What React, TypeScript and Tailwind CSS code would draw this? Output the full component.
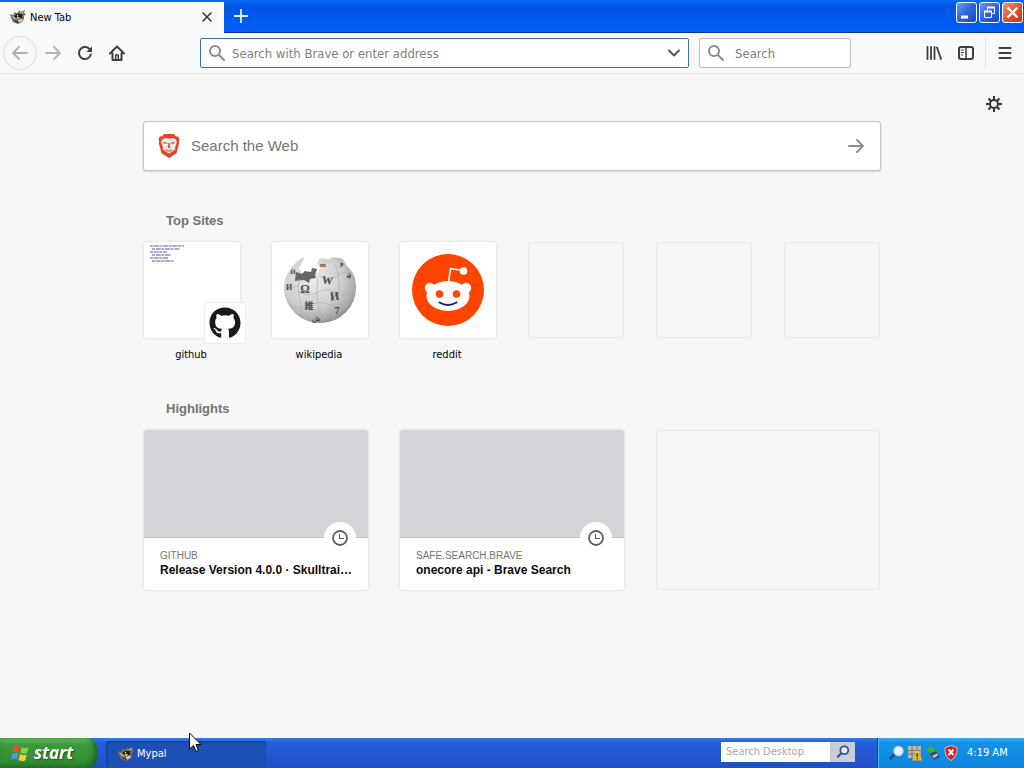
// src/App.tsx
import React from 'react';
import { FaGithub } from 'react-icons/fa';

const UI_FONT = "font-['DejaVu_Sans_Condensed','DejaVu_Sans',sans-serif]";

const MypalIcon: React.FC = () => (
  <svg viewBox="0 0 16 16" className="h-4 w-4 shrink-0" aria-hidden="true">
    <path d="M0 5l4 1 0-3 3 1 3-3 0 2 5-2-1 3 2 1-2 2 0 3-2 3-4 2-5-2-1-2-1-2z" fill="#77715f" />
    <path d="M4 7l3-2 5 0 2 2-2 2-4 0-3 1z" fill="#211e18" />
    <path d="M1 6.500l4 1.500 2 3-3-1zM10 4l4-2-1 2.500z" fill="#b9b096" />
    <path d="M6 8h4l-1.500 2.500zM12 6.500l2 0-1 2z" fill="#e3b75a" />
    <path d="M8 11l5-1.500-1 2.500-3 1.500z" fill="#d6d2c2" />
    <path d="M4 11l3 .5 2 2.500-3-.5z" fill="#3b362c" />
    <circle cx="7.500" cy="6.800" r="0.700" fill="#fff" />
  </svg>
);

const SearchIcon: React.FC = () => (
  <svg viewBox="0 0 16 16" className="h-4 w-4 shrink-0" fill="none" stroke="#8c8c8c" strokeWidth="2" strokeLinecap="round" aria-hidden="true">
    <circle cx="6" cy="6" r="5" />
    <path d="M9.8 9.8L15 15" />
  </svg>
);

const ArrowIcon: React.FC<{ className: string }> = ({ className }) => (
  <svg viewBox="0 0 16 16" className={className} fill="none" stroke="currentColor" strokeWidth="1.800" strokeLinecap="round" strokeLinejoin="round" aria-hidden="true">
    <path d="M1 8h14M9 2l6 6-6 6" />
  </svg>
);

const WikipediaGlobe: React.FC = () => (
  <svg viewBox="0 0 72 72" className="h-[72px] w-[72px]" aria-hidden="true">
    <defs>
      <radialGradient id="globe" cx="0.4" cy="0.35" r="0.68">
        <stop offset="0" stopColor="#ececec" />
        <stop offset="0.6" stopColor="#cfcfcf" />
        <stop offset="0.9" stopColor="#a6a6a6" />
        <stop offset="1" stopColor="#858585" />
      </radialGradient>
    </defs>
    <path d="M18 4c3-2 2 2 0 5l-3 6 5 5 14-1 2-5-3-4 2-5c4-2 7 1 10 0l4-2 6 1c5 0 6 5 8 8 6 5 9 12 9 21a36 35 0 0 1-72 2c0-13 7-24 18-31z" fill="url(#globe)" />
    <path d="M12 18l6 2 3-3 6 1 1-4 5 1-2 6 1 3-6 1-1 4-5-3-9 1z" fill="#666" />
    <g fill="none" stroke="#b4b4b4" strokeWidth="0.8">
      <path d="M1 32c5 3 10 1 14-1M15 25c-2 14 1 27 7 40M15 38c8 4 13 3 19 0s12-3 18 1 13 2 19-2M34 25c-3 16 0 29 5 45M51 10c6 14 6 36-2 56M5 50c7 5 14 4 20 1s16-3 22 0 11 2 18-2M35 22c6 4 14 3 20-1l10-5" />
    </g>
    <g fill="#4a4a4a" fontFamily="Liberation Serif, serif" fontWeight="bold" textAnchor="middle">
      <text x="21" y="39" fontSize="12">Ω</text>
      <text x="43" y="30" fontSize="11" transform="rotate(8 43 30)">W</text>
      <text x="51" y="46" fontSize="12" transform="rotate(-5 51 46)">И</text>
      <text x="53" y="60" fontSize="10">7</text>
      <text x="64" y="24" fontSize="10" transform="rotate(22 64 24)">ə</text>
      <text x="25" y="55" fontSize="9" fontFamily="Noto Sans CJK JP, sans-serif">維</text>
      <text x="5" y="36" fontSize="8">И</text>
      <text x="32" y="67" fontSize="7">ش</text>
      <text x="39" y="13" fontSize="7">m</text>
      <text x="57" y="11" fontSize="7">و</text>
      <text x="9" y="20" fontSize="7">Й</text>
    </g>
  </svg>
);

const RedditLogo: React.FC = () => (
  <svg viewBox="0 0 72 72" className="h-[72px] w-[72px]" aria-hidden="true">
    <circle cx="36" cy="36" r="36" fill="#ff4500" />
    <path d="M36.500 28l2-13.500 12 2" fill="none" stroke="#fff" strokeWidth="1.600" strokeLinejoin="round" />
    <circle cx="51.500" cy="17" r="3.800" fill="#fff" />
    <circle cx="18" cy="34" r="5.200" fill="#fff" />
    <circle cx="54" cy="34" r="5.200" fill="#fff" />
    <ellipse cx="36" cy="42" rx="21.500" ry="15" fill="#fff" />
    <circle cx="27.500" cy="40" r="3.800" fill="#ff4500" />
    <circle cx="44.500" cy="40" r="3.800" fill="#ff4500" />
    <path d="M27.500 48.500q8.500 5 17 0" fill="none" stroke="#0b2a66" strokeWidth="2" strokeLinecap="round" />
  </svg>
);

const BraveLogo: React.FC = () => (
  <svg viewBox="0 0 22 24" className="h-6 w-[22px] shrink-0" aria-hidden="true">
    <path d="M6 0h10l2 2.500 2-.3 1.500 3-.7 2 .4 1.500-2.700 10.500L11 24l-7.500-4.800L.8 8.700l.4-1.500-.7-2L2 2.200l2 .3z" fill="#e2442b" />
    <path d="M7 4l4 .8L15 4l3 1.500.8 3-1.800 5 .5 2.500-2.500 2-4 3-4-3-2.500-2 .5-2.500-1.800-5 .8-3z" fill="#f7e9e2" />
    <path d="M5 8l4 .5.500 1.500L5.500 9.500zM17 8l-4 .5-.5 1.500 4-.5z" fill="#a8705c" />
    <path d="M10.200 9h1.600l.6 4.500L11 14.700l-1.400-1.200zM7.500 15l3.500 1.500 3.500-1.500-1 2.500h-5z" fill="#c9705a" />
    <path d="M4.500 14.500l3 3 3.500 2 3.500-2 3-3-.8 4L11 22l-5.700-3.500z" fill="#e2442b" />
  </svg>
);

const ClockIcon: React.FC = () => (
  <svg viewBox="0 0 16 16" className="h-4 w-4" fill="none" stroke="#606060" aria-hidden="true">
    <circle cx="8" cy="8" r="7" strokeWidth="1.800" />
    <path d="M7.500 4v4.500H12" strokeWidth="1.200" />
  </svg>
);

const WindowControls: React.FC = () => (
  <div className="flex gap-[2px] pt-[2px] pr-px">
    <button aria-label="Minimize" className="h-[21px] w-[21px] rounded-[3px] border border-white bg-linear-to-br from-[#6b97f0] via-[#2e63dc] to-[#1c48c4]">
      <svg viewBox="0 0 19 19" aria-hidden="true"><path d="M4 14h7" stroke="#fff" strokeWidth="3" /></svg>
    </button>
    <button aria-label="Restore" className="h-[21px] w-[21px] rounded-[3px] border border-white bg-linear-to-br from-[#6b97f0] via-[#2e63dc] to-[#1c48c4]">
      <svg viewBox="0 0 19 19" fill="none" stroke="#fff" aria-hidden="true">
        <path d="M7.500 7V4.500h7v6H12" /><path d="M7 4.500h8" strokeWidth="2" />
        <path d="M4.500 8.500h7v6h-7z" /><path d="M4 8.500h8" strokeWidth="2" />
      </svg>
    </button>
    <button aria-label="Close" className="h-[21px] w-[21px] rounded-[3px] border border-white bg-linear-to-br from-[#f0977b] via-[#e2552d] to-[#c4340f]">
      <svg viewBox="0 0 19 19" aria-hidden="true"><path d="M4.500 4.500l10 10M14.500 4.500l-10 10" stroke="#fff" strokeWidth="2.400" /></svg>
    </button>
  </div>
);

const TabStrip: React.FC = () => (
  <header className="flex h-[33px] items-start bg-linear-to-b from-[#0a6cf2] from-0% via-[#0054e3] via-20% to-[#0060fa] to-90% shadow-[inset_0_-1px_0_#003399]">
    <div className="mt-[2px] flex h-[31px] w-56 items-center bg-[#f9f9fa] pr-2 pb-px pl-[10px]">
      <MypalIcon />
      <span className="ml-1 flex-1 pt-px text-[11px] leading-4 text-black">New Tab</span>
      <button aria-label="Close tab" className="flex h-[18px] w-[18px] items-center justify-center">
        <svg viewBox="0 0 10 10" className="h-[10px] w-[10px]" stroke="#333" strokeWidth="1.500" aria-hidden="true"><path d="M0.500 0.500l9 9M9.500 0.500l-9 9" /></svg>
      </button>
    </div>
    <button aria-label="Open a new tab" className="flex h-8 w-[34px] items-center justify-center">
      <svg viewBox="0 0 14 14" className="h-[14px] w-[14px]" stroke="#e4efff" strokeWidth="1.800" aria-hidden="true"><path d="M7 0v14M0 7h14" /></svg>
    </button>
    <div className="flex-1" />
    <WindowControls />
  </header>
);

const NavBar: React.FC = () => (
  <nav className="flex h-[41px] items-center border-b border-[#e6e6e8] bg-[#f9f9fa] px-[3px]">
    <button aria-label="Back" disabled className="flex h-[34px] w-[34px] items-center justify-center rounded-full border border-[#dcdcdc] text-[#b0b0b0]">
      <ArrowIcon className="h-4 w-4 rotate-180" />
    </button>
    <button aria-label="Forward" disabled className="flex h-8 w-8 items-center justify-center text-[#b5b5b5]">
      <ArrowIcon className="h-4 w-4" />
    </button>
    <button aria-label="Reload" className="flex h-8 w-8 items-center justify-center">
      <svg viewBox="0 0 16 16" className="h-4 w-4" fill="none" stroke="#3d3d3d" strokeWidth="2" strokeLinecap="round" aria-hidden="true">
        <path d="M13.800 9.500A6 6 0 1 1 12 3.600L13.500 5" />
        <path d="M15 1.500V7H9.500z" fill="#3d3d3d" stroke="none" />
      </svg>
    </button>
    <button aria-label="Home" className="flex h-8 w-8 items-center justify-center">
      <svg viewBox="0 0 16 16" className="h-4 w-4" fill="none" stroke="#3d3d3d" strokeWidth="2" strokeLinecap="round" strokeLinejoin="round" aria-hidden="true">
        <path d="M1 8.500L8 1.500l7 7M3.500 8.500V15h9V8.500" />
        <path d="M6.700 14.500V10h2.600v4.500" strokeWidth="1.500" />
      </svg>
    </button>
    <div className="ml-[67px] flex h-[30px] flex-1 items-center rounded-[2px] border border-[#3b6ea5] bg-white px-2">
      <SearchIcon />
      <input
        aria-label="Address"
        placeholder="Search with Brave or enter address"
        className="ml-[7px] min-w-0 flex-1 bg-transparent pt-px text-[13px] text-[#333] outline-none placeholder:text-[#7e7e7e]"
      />
      <button aria-label="Show history" className="flex w-3 justify-center">
        <svg viewBox="0 0 12 8" className="h-2 w-3" fill="none" stroke="#555" strokeWidth="2" strokeLinecap="round" strokeLinejoin="round" aria-hidden="true"><path d="M1 1.500l5 5 5-5" /></svg>
      </button>
    </div>
    <div className="ml-[10px] flex h-[30px] w-[152px] items-center rounded-[2px] border border-[#bdbdbd] bg-white px-2">
      <SearchIcon />
      <input
        aria-label="Search"
        placeholder="Search"
        className="ml-[11px] min-w-0 flex-1 bg-transparent pt-px text-[13px] text-[#333] outline-none placeholder:text-[#7e7e7e]"
      />
    </div>
    <div className="w-[67px]" />
    <button aria-label="Library" className="flex h-8 w-8 items-center justify-center">
      <svg viewBox="0 0 16 16" className="h-4 w-4" stroke="#3d3d3d" strokeWidth="1.800" strokeLinecap="round" aria-hidden="true"><path d="M1.500 2v12M5 2v12M8.500 2v12M11 2.500L15 14" /></svg>
    </button>
    <button aria-label="Sidebars" className="flex h-8 w-8 items-center justify-center">
      <svg viewBox="0 0 16 16" className="h-4 w-4" fill="none" stroke="#3d3d3d" strokeWidth="2" aria-hidden="true">
        <rect x="1" y="2" width="14" height="12" rx="2" />
        <path d="M8 2v12" strokeWidth="1.500" />
        <path d="M3 5h3M3 7.500h3M3 10h2" strokeWidth="1" />
      </svg>
    </button>
    <div className="ml-[3px] h-8 w-px bg-[#e2e2e2]" />
    <button aria-label="Open menu" className="ml-[3px] flex h-8 w-8 items-center justify-center">
      <svg viewBox="0 0 14 14" className="h-[14px] w-[14px]" stroke="#3d3d3d" strokeWidth="2" strokeLinecap="round" aria-hidden="true"><path d="M1.500 2h11M1.500 7h11M1.500 12h11" /></svg>
    </button>
  </nav>
);

const TILE = 'relative flex h-24 w-24 items-center justify-center rounded-[3px] bg-white shadow-[0_0_3px_rgba(12,12,13,0.16)]';

const TopSites: React.FC = () => (
  <section>
    <h2 className="px-[22px] font-['Liberation_Sans',sans-serif] text-[13px] leading-5 font-bold text-[#737373]">Top Sites</h2>
    <ul className="mt-[11px] flex justify-between text-center text-[11px] leading-4 text-black">
      <li>
        <a href="#github">
          <div className={TILE}>
            <svg viewBox="0 0 40 20" className="absolute top-[2px] left-1 h-5 w-10" stroke="#5a5aa0" strokeWidth="1.200" strokeDasharray="3 0.700 5 0.600" aria-hidden="true">
              <path d="M2 2h34M4 5h28M2 8h17M4 11h19M2 14h18M4 17h22" />
            </svg>
            <div className="absolute -right-[5px] -bottom-[5px] flex h-10 w-10 items-center justify-center rounded-[3px] bg-white shadow-[0_0_0_1px_#ececec]">
              <FaGithub className="h-8 w-8 text-[#1b1817]" />
            </div>
          </div>
          <span className="mt-[9px] block pr-[2px]">github</span>
        </a>
      </li>
      <li>
        <a href="#wikipedia">
          <div className={TILE}><WikipediaGlobe /></div>
          <span className="mt-[9px] block pr-[2px]">wikipedia</span>
        </a>
      </li>
      <li>
        <a href="#reddit">
          <div className={TILE}><RedditLogo /></div>
          <span className="mt-[9px] block pr-[2px]">reddit</span>
        </a>
      </li>
      {[0, 1, 2].map((i) => (
        <li key={i} className="h-24 w-24 rounded-[3px] shadow-[inset_0_0_0_1px_#e8e8e9]" />
      ))}
    </ul>
  </section>
);

const highlights = [
  { host: 'GITHUB', title: 'Release Version 4.0.0 · Skulltrai…' },
  { host: 'SAFE.SEARCH.BRAVE', title: 'onecore api - Brave Search' },
];

const Highlights: React.FC = () => (
  <section className="mt-9 font-['Liberation_Sans',sans-serif]">
    <h2 className="px-[22px] text-[13px] leading-5 font-bold text-[#737373]">Highlights</h2>
    <div className="mt-[11px] grid grid-cols-3 gap-8">
      {highlights.map((item) => (
        <a key={item.host} href="#highlight" className="block h-40 rounded-[3px] bg-white shadow-[0_0_3px_rgba(12,12,13,0.16)]">
          <div className="relative h-[108px] rounded-t-[3px] border-b border-[#bfbfc3] bg-[#d4d4d9]">
            <div className="absolute right-3 -bottom-[17px] flex h-8 w-8 items-center justify-center rounded-full bg-white">
              <ClockIcon />
            </div>
          </div>
          <div className="pt-[10px] pr-2 pl-4">
            <div className="text-[10px] leading-[15px] text-[#737373]">{item.host}</div>
            <h3 className="text-[12px] leading-[15px] font-bold text-[#0c0c0d]">{item.title}</h3>
          </div>
        </a>
      ))}
      <div className="h-40 rounded-[3px] shadow-[inset_0_0_0_1px_#e8e8e9]" />
    </div>
  </section>
);

const NewTabPage: React.FC = () => (
  <main className="relative flex-1 bg-[#f7f7f7] pt-[47px]">
    <button aria-label="Customize your New Tab page" className="absolute top-[22px] right-[22px]">
      <svg viewBox="0 0 16 16" className="h-4 w-4" fill="none" stroke="#333" strokeWidth="2" aria-hidden="true">
        <circle cx="8" cy="8" r="4" />
        <path d="M8 0v3.500M8 12.500V16M0 8h3.500M12.500 8H16M2.500 2.500l2.300 2.300M11.200 11.200l2.300 2.300M13.500 2.500l-2.300 2.300M4.800 11.200l-2.300 2.300" />
      </svg>
    </button>
    <div className="mx-auto max-w-[736px]">
      <form onSubmit={(e) => e.preventDefault()} className="-mx-px flex h-[50px] items-center rounded-[3px] border border-[#c4c4c6] bg-white pr-4 pl-[14px] shadow-[0_1px_2px_rgba(0,0,0,0.15)]">
        <BraveLogo />
        <input
          aria-label="Search the Web"
          placeholder="Search the Web"
          className="ml-[11px] min-w-0 flex-1 bg-transparent pt-px font-['Liberation_Sans',sans-serif] text-[15px] outline-none placeholder:text-[#777]"
        />
        <button aria-label="Submit search" className="text-[#8a8a8a]">
          <ArrowIcon className="h-4 w-4" />
        </button>
      </form>
      <div className="mt-10">
        <TopSites />
        <Highlights />
      </div>
    </div>
  </main>
);

const Taskbar: React.FC = () => (
  <footer className="flex h-[30px] items-stretch bg-linear-to-b from-[#3a7be8] from-0% via-[#245edb] via-15% to-[#1f50c4] text-[11px] text-white">
    <button className="flex w-[97px] items-center rounded-r-[10px] bg-linear-to-b from-[#5fb85f] via-[#3a993a] via-25% to-[#2f8a2f] pl-[11px] shadow-[inset_-3px_-2px_5px_#1e661e]">
      <svg viewBox="0 0 20 20" className="h-5 w-5" aria-hidden="true">
        <path d="M3 3q3-2 6 0l-1.500 6q-3-1.500-6 0z" fill="#e8542a" />
        <path d="M10.500 4q3 2 7 0L16 10q-3 1.500-6.500-.5z" fill="#8fd13f" />
        <path d="M1.200 10.500q3-1.500 6 0L5.700 16.500q-3-1.500-6 0z" fill="#5a8fea" />
        <path d="M9 11q3 2 6.700.5l-1.500 6q-3 1.500-6.700-.5z" fill="#f6cf3c" />
      </svg>
      <span className="ml-[3px] font-['Open_Sans',sans-serif] text-[17px] leading-5 font-bold italic [text-shadow:1px_1px_2px_#1d4d1d]">start</span>
    </button>
    <button className="mt-[3px] mb-px ml-[9px] flex w-40 items-center gap-[3px] rounded-[2px] bg-[#1e4fb5] pl-3 shadow-[inset_1px_1px_2px_#123a8c]">
      <MypalIcon />
      <span>Mypal</span>
    </button>
    <div className="flex-1" />
    <div className="mt-1 flex h-5 w-[134px]">
      <input
        aria-label="Search Desktop"
        placeholder="Search Desktop"
        className="min-w-0 flex-1 bg-white pl-[5px] text-[11px] text-black outline-none placeholder:text-[#a8a8a8]"
      />
      <button aria-label="Search" className="flex w-[25px] items-center justify-center bg-[#c9cdd6]">
        <svg viewBox="0 0 16 16" className="h-[14px] w-[14px]" fill="#e8f0ff" stroke="#3050a0" strokeWidth="2" aria-hidden="true">
          <circle cx="9.500" cy="6" r="4.500" /><path d="M6 9.500L1.500 14" strokeWidth="2.500" />
        </svg>
      </button>
    </div>
    <div className="ml-[22px] flex w-[147px] items-center border-l border-[#0b3ea8] bg-linear-to-b from-[#3bb0f5] from-0% via-[#1292e8] via-15% to-[#0f84dc] pl-[11px] shadow-[inset_1px_0_0_#4cc0f8]">
      <svg viewBox="0 0 16 16" className="h-4 w-4" aria-hidden="true">
        <path d="M6 9l-5 5" stroke="#274a86" strokeWidth="2.500" /><circle cx="9.500" cy="6" r="4.500" fill="#e6f4ff" stroke="#b7d4f5" strokeWidth="1.500" />
      </svg>
      <svg viewBox="0 0 16 16" className="ml-[2px] h-4 w-4" aria-hidden="true">
        <rect x="1" y="1" width="13" height="12" fill="#b9b9ad" /><path d="M1 5.500h13M1 9h13M5 1v12M10 1v4" stroke="#77776d" />
        <path d="M10 4.500L15.500 15.500H5z" fill="#f6b620" /><path d="M10.300 8.500v3.500M10.300 13v1.300" stroke="#4c3200" strokeWidth="1.400" />
      </svg>
      <svg viewBox="0 0 16 16" className="ml-[2px] h-4 w-4" aria-hidden="true">
        <path d="M4 8l6-3 5 7-6 3z" fill="#394b54" /><path d="M7 11l5-2.500 1 2-4 2.500z" fill="#b8c7cc" /><path d="M1 5l5-4 1 2h3v4H7L6 9z" fill="#35b33a" />
      </svg>
      <svg viewBox="0 0 16 16" className="ml-[2px] h-4 w-4" aria-hidden="true">
        <path d="M8 .5l6 2q1 8.500-6 13-7-4.500-6-13z" fill="#d41f2b" stroke="#e5bcbc" /><path d="M5.500 4.500l5 5.500M10.500 4.500l-5 5.500" stroke="#fff" strokeWidth="2" />
      </svg>
      <time className="ml-2 pt-px whitespace-nowrap">4:19 AM</time>
    </div>
  </footer>
);

const App: React.FC = () => {
  return (
    <div className={`relative flex min-h-screen flex-col ${UI_FONT}`}>
      <TabStrip />
      <NavBar />
      <NewTabPage />
      <Taskbar />
      {/* Mouse pointer */}
      <svg viewBox="0 0 12 21" className="pointer-events-none absolute bottom-[15px] left-[189px] h-[21px] w-3" aria-hidden="true">
        <path d="M0.500 1v16l4-3.500 2.500 6 2.500-1-2.500-6h5z" fill="#fff" stroke="#000" />
      </svg>
    </div>
  );
};

export default App;
